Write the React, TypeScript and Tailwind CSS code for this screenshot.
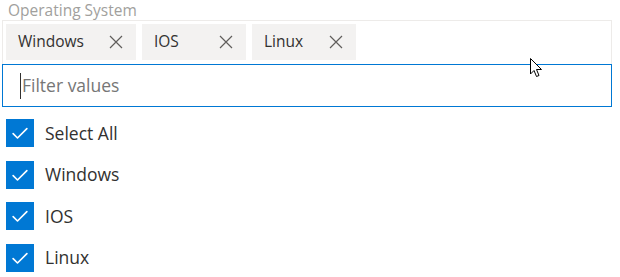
import { useState } from "react";

const options = ["Windows", "IOS", "Linux"];

function CheckBox() {
  return (
    <span className="flex h-[28px] w-[28px] shrink-0 items-center justify-center bg-[#0078d4]">
      <svg width="20" height="20" viewBox="0 0 16 16" fill="none">
        <path d="M2.5 8.5 L6 12 L13.5 4.5" stroke="#fff" strokeWidth="1.3" strokeLinecap="round" strokeLinejoin="round" />
      </svg>
    </span>
  );
}

function Tag({ label }: { label: string }) {
  return (
    <div className="flex h-[36px] min-w-[104px] items-center justify-between bg-[#f3f2f1] pl-[12px] pr-[13px]">
      <span className="text-[15.5px] text-[#323130]">{label}</span>
      <svg className="ml-[25px]" width="14" height="14" viewBox="0 0 14 14" fill="none">
        <path d="M1 1 L13 13 M13 1 L1 13" stroke="#605e5c" strokeWidth="1.2" />
      </svg>
    </div>
  );
}

export default function App() {
  const [filter, setFilter] = useState("");

  return (
    <div className="relative h-[277px] w-[620px] overflow-hidden bg-white font-['Open_Sans',sans-serif]">
      <div className="h-[20px] pl-[8px] text-[15.5px] leading-[20px] text-[#a19f9d]">Operating System</div>

      <div className="mx-[2px] w-[610px] border border-b-0 border-[#edebe9] px-[3px] pt-[3px] pb-[4px]">
        <div className="flex gap-[6px]">
          {options.map((o) => (
            <Tag key={o} label={o} />
          ))}
        </div>
      </div>

      <div className="mx-[2px] flex h-[43px] w-[610px] items-center border border-[#0078d4] pl-[17px]">
        <span className="h-[26px] w-px bg-[#323130]" />
        <input
          value={filter}
          onChange={(e) => setFilter(e.target.value)}
          placeholder="Filter values"
          className="ml-[1px] w-full bg-transparent text-[17.5px] text-[#323130] outline-none placeholder:text-[#767676]"
        />
      </div>

      <ul className="mt-[12px] flex flex-col gap-[13.5px] pl-[6px]">
        {["Select All", ...options].map((o) => (
          <li key={o} className="flex h-[28px] items-center gap-[11px]">
            <CheckBox />
            <span className="text-[17.5px] text-[#323130]">{o}</span>
          </li>
        ))}
      </ul>

      {/* mouse pointer */}
      <svg className="absolute left-[530px] top-[58px]" width="14" height="22" viewBox="0 0 14 22">
        <path d="M0.5 0.5 L0.5 16 L4 12.5 L6.5 18.5 L9 17.5 L6.5 11.5 L11.5 11.5 Z" fill="#fff" stroke="#000" strokeWidth="1" strokeLinejoin="round" />
      </svg>
    </div>
  );
}
